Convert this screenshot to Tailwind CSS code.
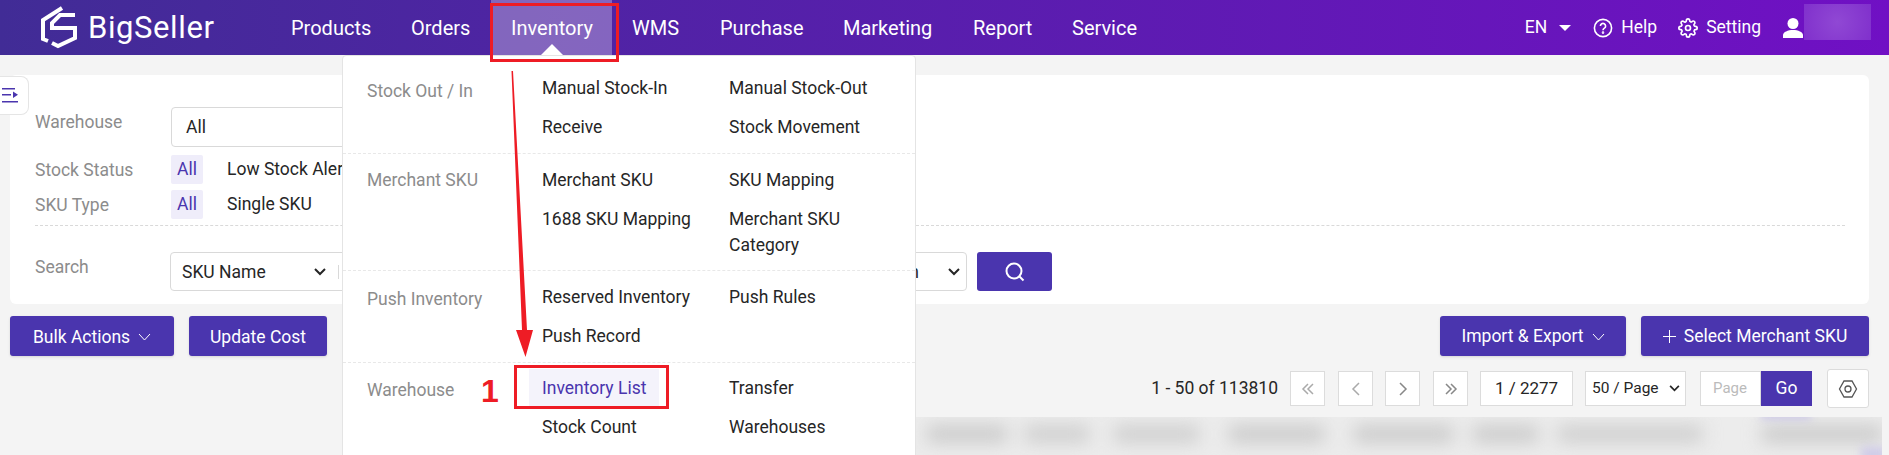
<!DOCTYPE html>
<html>
    <head>
        <meta charset="utf-8" />
        <title>Inventory List</title>
        <script src="https://cdn.jsdelivr.net/npm/@tailwindcss/browser@4"></script>
    </head>
    <body class="bg-[#f4f4f4] font-['Roboto',sans-serif] text-[17.5px] text-[#262626] overflow-hidden">
        <div class="relative w-[1889px] h-[455px] overflow-hidden">
            <!-- top nav -->
            <header class="h-[55px] flex items-center bg-linear-to-r/srgb from-[#412c96] to-[#7010c4] text-white">
                <div class="w-[291px] pl-[41px] flex items-center gap-[9px]">
                    <svg width="38" height="44" viewBox="0 0 38 44" fill="none" stroke="#fff" stroke-width="4">
                        <path d="M21 2L2 14v19l5 2" />
                        <path d="M34 9H19l-8 8v5h23v10l-17 8-6-3" />
                    </svg>
                    <span class="text-[31px] leading-none tracking-[0.6px]">BigSeller</span>
                </div>
                <nav class="flex text-[20px] h-full items-center">
                    <a class="w-[120px]">Products</a>
                    <a class="w-[80px]">Orders</a>
                    <a class="w-[121px] self-stretch bg-white/30 flex items-center pl-[20px] relative">Inventory
                        <span class="absolute bottom-0 left-[50px] w-0 h-0 border-x-[11px] border-x-transparent border-b-[11px] border-b-white"></span>
                    </a>
                    <a class="ml-[20px] w-[88px]">WMS</a>
                    <a class="w-[123px]">Purchase</a>
                    <a class="w-[130px]">Marketing</a>
                    <a class="w-[99px]">Report</a>
                    <a>Service</a>
                </nav>
                <div class="ml-auto flex items-center text-[17.5px] pr-[18px]">
                    <span>EN</span>
                    <span class="ml-[12px] w-0 h-0 border-x-[6px] border-x-transparent border-t-[6px] border-t-white"></span>
                    <svg class="ml-[22px]" width="20" height="20" viewBox="0 0 20 20" fill="none" stroke="#fff" stroke-width="1.6"><circle cx="10" cy="10" r="8.6"/><path d="M7.400 8a2.600 2.600 0 1 1 4 2.200c-.9.600-1.400 1-1.400 2"/><circle cx="10" cy="14.600" r=".5"/></svg>
                    <span class="ml-[8px]">Help</span>
                    <svg class="ml-[21px]" width="20" height="20" viewBox="0 0 24 24" fill="none" stroke="#fff" stroke-width="2"><circle cx="12" cy="12" r="3"/><path d="M19.400 15a1.650 1.650 0 0 0 .33 1.820l.06.06a2 2 0 1 1-2.830 2.830l-.06-.06a1.650 1.650 0 0 0-2.820 1.170V21a2 2 0 1 1-4 0v-.09A1.650 1.650 0 0 0 7.200 19.700l-.06.06a2 2 0 1 1-2.830-2.830l.06-.06A1.650 1.650 0 0 0 3.200 14H3a2 2 0 1 1 0-4h.09A1.650 1.650 0 0 0 4.300 7.200l-.06-.06a2 2 0 1 1 2.830-2.830l.06.06A1.650 1.650 0 0 0 10 3.200V3a2 2 0 1 1 4 0v.09a1.650 1.650 0 0 0 2.800 1.200l.06-.06a2 2 0 1 1 2.830 2.830l-.06.06A1.650 1.650 0 0 0 20.800 10H21a2 2 0 1 1 0 4h-.09a1.650 1.650 0 0 0-1.510 1z"/></svg>
                    <span class="ml-[8px]">Setting</span>
                    <svg class="ml-[21px]" width="22" height="22" viewBox="0 0 22 22" fill="#fff"><circle cx="11" cy="6.500" r="5.500"/><path d="M1 21v-3c0-3 5-5 10-5s10 2 10 5v3z"/></svg>
                    <div class="w-[67px] h-[36px] -mt-[12px] bg-[radial-gradient(circle,#9048d4,#8030cc)]"></div>
                </div>
            </header>

            <!-- filter card -->
            <section class="mt-[20px] mx-[10px] w-[1859px] h-[229px] bg-white rounded-[6px] pt-[32px] pl-[25px] pr-[24px]">
                <div class="flex h-[40px]">
                    <span class="w-[136px] text-[#8c8c8c] pt-[2px]">Warehouse</span>
                    <div class="w-[300px] h-[40px] border border-[#d9d9d9] rounded-[4px] pl-[14px] flex items-center">All</div>
                </div>
                <div class="flex items-center h-[29px] mt-[8px]">
                    <span class="w-[136px] text-[#8c8c8c] pt-[2px]">Stock Status</span>
                    <span class="w-[32px] h-[29px] bg-[#efedfa] text-[#4a35ae] rounded-[2px] flex items-center justify-center">All</span>
                    <span class="ml-[24px]">Low Stock Alert</span>
                </div>
                <div class="flex items-center h-[29px] mt-[6px]">
                    <span class="w-[136px] text-[#8c8c8c] pt-[2px]">SKU Type</span>
                    <span class="w-[32px] h-[29px] bg-[#efedfa] text-[#4a35ae] rounded-[2px] flex items-center justify-center">All</span>
                    <span class="ml-[24px]">Single SKU</span>
                </div>
                <div class="border-t border-dashed border-[#d9d9d9] mt-[6px]"></div>
                <div class="flex h-[39px] mt-[26px]">
                    <span class="w-[135px] text-[#8c8c8c] mt-[2px]">Search</span>
                    <div class="w-[797px] h-[39px] border border-[#d9d9d9] rounded-[4px] flex items-center">
                        <div class="w-[168px] h-[14px] flex items-center pl-[11px] pr-[12px] border-r border-[#d9d9d9]">
                            <span class="pt-[2px]">SKU Name</span>
                            <svg class="ml-auto" width="12" height="8" viewBox="0 0 12 8" fill="none" stroke="#262626" stroke-width="2"><path d="M1 1l5 5 5-5"/></svg>
                        </div>
                        <span class="ml-auto pt-[2px]">Contain</span>
                        <svg class="ml-[29px] mr-[6px]" width="12" height="8" viewBox="0 0 12 8" fill="none" stroke="#262626" stroke-width="2"><path d="M1 1l5 5 5-5"/></svg>
                    </div>
                    <button class="ml-[10px] w-[75px] h-[39px] bg-[#4a35ae] rounded-[3px] flex items-center justify-center">
                        <svg width="22" height="22" viewBox="0 0 22 22" fill="none" stroke="#fff" stroke-width="2"><circle cx="10" cy="10" r="7.500"/><path d="M15.500 15.500l4 4"/></svg>
                    </button>
                </div>
            </section>

            <!-- toolbar -->
            <div class="flex mt-[12px] mx-[10px] w-[1859px] h-[40px] text-white">
                <button class="w-[164px] pt-[2px] bg-[#4a35ae] rounded-[3px] flex items-center justify-center gap-[8px] shadow-sm">Bulk Actions
                    <svg width="13" height="8" viewBox="0 0 13 8" fill="none" stroke="#fff"><path d="M1 1l5.500 6L12 1"/></svg></button>
                <button class="ml-[15px] w-[138px] pt-[2px] bg-[#4a35ae] rounded-[3px] shadow-sm">Update Cost</button>
                <button class="ml-auto w-[186px] pt-[1px] bg-[#4a35ae] rounded-[3px] flex items-center justify-center gap-[8px] shadow-sm">Import &amp; Export
                    <svg width="13" height="8" viewBox="0 0 13 8" fill="none" stroke="#fff"><path d="M1 1l5.500 6L12 1"/></svg></button>
                <button class="ml-[15px] w-[228px] pt-[1px] bg-[#4a35ae] rounded-[3px] flex items-center justify-center gap-[8px] shadow-sm">
                    <svg width="13" height="13" viewBox="0 0 13 13" stroke="#fff"><path d="M6.500 0v13M0 6.500h13"/></svg>Select Merchant SKU</button>
            </div>

            <!-- pagination -->
            <div class="flex items-center justify-end mt-[13px] mr-[20px] h-[39px]">
                <span class="mr-[12px]">1 - 50 of 113810</span>
                <span class="w-[35px] h-[35px] bg-white border border-[#dcdcdc] text-[#aaa] flex items-center justify-center mr-[13px]">
                    <svg width="14" height="14" viewBox="0 0 14 14" fill="none" stroke="currentColor" stroke-width="1.5"><path d="M7 2L2 7l5 5M12 2L7 7l5 5"/></svg></span>
                <span class="w-[35px] h-[35px] bg-white border border-[#dcdcdc] text-[#aaa] flex items-center justify-center mr-[12px]">
                    <svg width="10" height="16" viewBox="0 0 10 16" fill="none" stroke="currentColor" stroke-width="1.5"><path d="M8 2L2 8l6 6"/></svg></span>
                <span class="w-[35px] h-[35px] bg-white border border-[#dcdcdc] text-[#888] flex items-center justify-center mr-[13px]">
                    <svg width="10" height="16" viewBox="0 0 10 16" fill="none" stroke="currentColor" stroke-width="1.5"><path d="M2 2l6 6-6 6"/></svg></span>
                <span class="w-[35px] h-[35px] bg-white border border-[#dcdcdc] text-[#888] flex items-center justify-center mr-[12px]">
                    <svg width="14" height="14" viewBox="0 0 14 14" fill="none" stroke="currentColor" stroke-width="1.5"><path d="M2 2l5 5-5 5M7 2l5 5-5 5"/></svg></span>
                <span class="w-[93px] h-[35px] bg-white border border-[#dcdcdc] flex items-center justify-center mr-[12px] text-[17px]">1 / 2277</span>
                <span class="w-[101px] h-[35px] bg-white border border-[#dcdcdc] flex items-center pl-[6px] mr-[14px] text-[15.500px]">50 / Page
                    <svg class="ml-[10px]" width="11" height="7" viewBox="0 0 12 8" fill="none" stroke="#262626" stroke-width="2"><path d="M1 1l5 5 5-5"/></svg></span>
                <span class="w-[61px] h-[35px] bg-white border border-[#dcdcdc] text-[#bbb] text-[15px] flex items-center pl-[12px]">Page</span>
                <span class="w-[51px] h-[35px] bg-[#4a35ae] text-white flex items-center justify-center mr-[15px]">Go</span>
                <span class="w-[42px] h-[39px] bg-white border border-[#dcdcdc] rounded-[3px] flex items-center justify-center">
                    <svg width="20" height="20" viewBox="0 0 20 20" fill="none" stroke="#555" stroke-width="1.3"><path d="M6 2h8l4.500 8-4.500 8H6l-4.500-8z"/><circle cx="10" cy="10" r="3"/></svg></span>
            </div>

            <!-- blurred table row -->
            <div class="absolute left-[916px] top-[417px] w-[966px] h-[38px] bg-[#ececec] overflow-hidden">
                <div class="h-[16px] mt-[9px] flex pl-[11px] blur-[9px]">
                    <span class="w-[80px] bg-[#c8c8c8]"></span>
                    <span class="ml-[18px] w-[65px] bg-[#cccccc]"></span>
                    <span class="ml-[25px] w-[85px] bg-[#cccccc]"></span>
                    <span class="ml-[30px] w-[95px] bg-[#c8c8c8]"></span>
                    <span class="ml-[30px] w-[100px] bg-[#c8c8c8]"></span>
                    <span class="ml-[20px] w-[65px] bg-[#c8c8c8]"></span>
                    <span class="ml-[20px] w-[145px] bg-[#cccccc]"></span>
                    <span class="ml-[60px] w-[120px] bg-[#c8c8c8]"></span>
                </div>
                <div class="absolute left-[845px] -top-[6px] w-[50px] h-[8px] bg-[#c8c4e6] blur-[4px]"></div>
                <div class="absolute left-[945px] top-[30px] w-[25px] h-[14px] bg-[#cfcbe8] blur-[4px]"></div>
            </div>

            <!-- dropdown -->
            <div class="absolute left-[342px] top-[55px] w-[574px] h-[420px] bg-white border border-[#e4e4e4] rounded-t-[4px] text-[#262626]">
                <div class="flex h-[98px] border-b border-dashed border-[#e8e8e8] pt-[13px]">
                    <span class="w-[199px] pl-[24px] text-[#8c8c8c] pt-[9px]">Stock Out / In</span>
                    <div class="grid grid-cols-[187px_160px] auto-rows-[39px] items-center">
                        <a>Manual Stock-In</a><a>Manual Stock-Out</a><a>Receive</a><a>Stock Movement</a>
                    </div>
                </div>
                <div class="flex h-[117px] border-b border-dashed border-[#e8e8e8] pt-[6px]">
                    <span class="w-[199px] pl-[24px] text-[#8c8c8c] pt-[7px]">Merchant SKU</span>
                    <div class="grid grid-cols-[187px_160px] auto-rows-[39px] items-start pt-[7px]">
                        <a>Merchant SKU</a><a>SKU Mapping</a><a>1688 SKU Mapping</a><a class="leading-[26px]">Merchant SKU Category</a>
                    </div>
                </div>
                <div class="flex h-[92px] border-b border-dashed border-[#e8e8e8] pt-[6px]">
                    <span class="w-[199px] pl-[24px] text-[#8c8c8c] pt-[9px]">Push Inventory</span>
                    <div class="grid grid-cols-[187px_160px] auto-rows-[39px] items-start pt-[7px]">
                        <a>Reserved Inventory</a><a>Push Rules</a><a>Push Record</a>
                    </div>
                </div>
                <div class="flex pt-[6px]">
                    <span class="w-[199px] pl-[24px] text-[#8c8c8c] pt-[8px]">Warehouse</span>
                    <div class="grid grid-cols-[187px_160px] auto-rows-[39px] items-center">
                        <a class="relative text-[#4a35ae]"><span class="absolute -left-[13px] -top-[6px] w-[130px] h-[38px] bg-[#f4f3fb]"></span><span class="relative">Inventory List</span></a><a>Transfer</a><a>Stock Count</a><a>Warehouses</a>
                    </div>
                </div>
            </div>

            <!-- sidebar toggle -->
            <div class="absolute left-0 top-[76px] w-[29px] h-[39px] bg-white rounded-r-[8px] border border-l-0 border-[#e5e5e5] flex items-center pl-[2px]">
                <svg width="17" height="15" viewBox="0 0 17 15" fill="#4a35ae"><path d="M0 0h13v1.500H0zM0 6h9v1.500H0zM0 13h16v1.500H0zM11 3.500l5 3.200-5 3.200z"/></svg>
            </div>

            <!-- tutorial annotations -->
            <div class="absolute left-[490px] top-[3px] w-[129px] h-[59px] border-[3px] border-[#ee1c25]"></div>
            <div class="absolute left-[514px] top-[365px] w-[155px] h-[44px] border-[3px] border-[#ee1c25]"></div>
            <span class="absolute left-[481px] top-[367px] text-[#ee1c25] text-[32px] font-bold font-['Liberation_Sans',sans-serif]">1</span>
            <svg class="absolute left-[505px] top-[68px]" width="30" height="292" viewBox="0 0 30 292" fill="#ee1c25"><path d="M6.500 3L8 3 L 22 262 L28 262 L20.500 289 L11 262 L17 262z"/></svg>
        </div>
    </body>
</html>
